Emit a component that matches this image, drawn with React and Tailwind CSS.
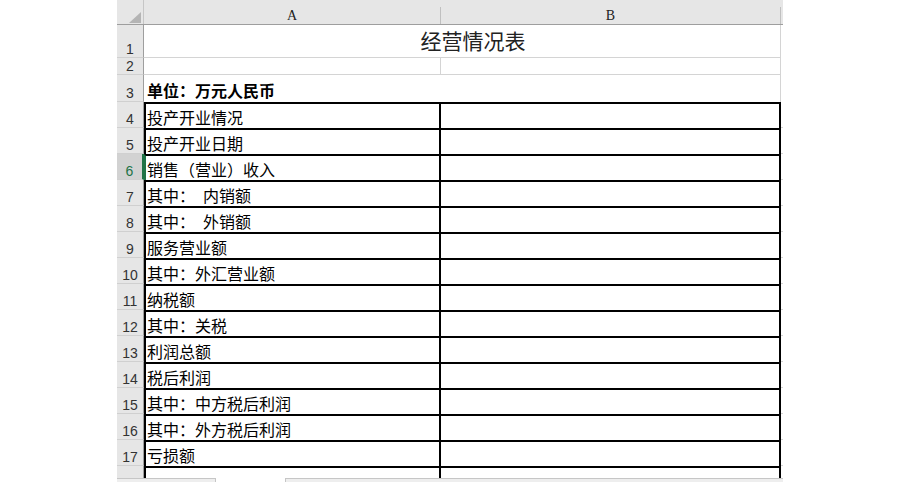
import React from "react";

const rows = [
  { n: 4, label: "投产开业情况" },
  { n: 5, label: "投产开业日期" },
  { n: 6, label: "销售（营业）收入", selected: true },
  { n: 7, label: "其中：\u2002内销额" },
  { n: 8, label: "其中：\u2002外销额" },
  { n: 9, label: "服务营业额" },
  { n: 10, label: "其中：外汇营业额" },
  { n: 11, label: "纳税额" },
  { n: 12, label: "其中：关税" },
  { n: 13, label: "利润总额" },
  { n: 14, label: "税后利润" },
  { n: 15, label: "其中：中方税后利润" },
  { n: 16, label: "其中：外方税后利润" },
  { n: 17, label: "亏损额" },
  { n: 18, label: "", hideNum: true },
];

const cjk = "font-['Noto_Sans_CJK_SC','Noto_Sans',sans-serif]";

function RowHead({ n, selected, hideNum }) {
  return (
    <div
      className={`w-[27px] shrink-0 flex items-end justify-center border-b border-[#d0d0d0] font-['Liberation_Sans',sans-serif] text-[14px] leading-none ${
        selected
          ? "bg-[#d2d2d2] text-[#217346] border-r-2 border-r-[#217346]"
          : "bg-[#e6e6e6] text-[#333] border-r border-r-[#9e9e9e]"
      }`}
    >
      {!hideNum && <span className="pb-[1px]">{n}</span>}
    </div>
  );
}

export default function App() {
  return (
    <div className="w-[900px] h-[482px] overflow-hidden bg-white flex flex-col">
      <div className="flex-1 overflow-hidden pl-[117px]">
        <div className="w-[666px]">
          {/* column header */}
          <div className="flex h-[25px] bg-[#e6e6e6] border-b border-[#9e9e9e]">
            <div className="w-[27px] shrink-0 flex items-end justify-end pr-[2px] pb-[1px] border-r border-[#c6c6c6]">
              <svg width="12" height="11" viewBox="0 0 12 11">
                <polygon points="12,0 12,11 0,11" fill="#b4b4b4" />
              </svg>
            </div>
            <div className="w-[297px] shrink-0 pt-[7px]">
              <div className="h-full border-r border-[#c0c0c0] flex items-end justify-center pb-[1px] font-['Liberation_Serif',serif] text-[14px] leading-none text-[#222]">
                A
              </div>
            </div>
            <div className="w-[340px] shrink-0 pt-[7px]">
              <div className="h-full border-r border-[#c0c0c0] flex items-end justify-center pb-[1px] font-['Liberation_Serif',serif] text-[14px] leading-none text-[#222]">
                B
              </div>
            </div>
            <div className="w-[2px] shrink-0" />
          </div>

          {/* row 1 */}
          <div className="flex h-[33px]">
            <RowHead n={1} />
            <div
              className={`w-[637px] shrink-0 border-r border-b border-[#d4d4d4] flex items-end justify-center pl-[22px] pb-[6px] text-[21px] leading-none text-[#222] ${cjk}`}
            >
              经营情况表
            </div>
          </div>

          {/* row 2 */}
          <div className="flex h-[17px]">
            <RowHead n={2} />
            <div className="w-[297px] shrink-0 border-r border-b border-[#d4d4d4]" />
            <div className="w-[340px] shrink-0 border-r border-b border-[#d4d4d4]" />
          </div>

          {/* row 3 */}
          <div className="flex h-[27px]">
            <RowHead n={3} />
            <div
              className={`w-[637px] shrink-0 border-r border-[#d4d4d4] flex items-center pl-[3px] pt-[2px] text-[16px] font-bold leading-none text-black ${cjk}`}
            >
              单位：万元人民币
            </div>
          </div>

          {/* bordered block */}
          {rows.map((r) => (
            <div key={r.n} className="flex h-[26px]">
              <RowHead n={r.n} selected={r.selected} hideNum={r.hideNum} />
              <div
                className={`w-[295px] shrink-0 border-l-2 border-t-2 border-t-black flex items-center pl-[1px] pt-[2px] text-[16px] leading-none text-black whitespace-pre ${cjk} ${
                  r.selected ? "border-l-[#217346]" : "border-l-black"
                }`}
              >
                {r.label}
              </div>
              <div className="w-[342px] shrink-0 border-l-2 border-t-2 border-r-2 border-black" />
              <div className="w-[2px] shrink-0 border-b border-[#d4d4d4]" />
            </div>
          ))}
        </div>
      </div>

      {/* sheet tab strip */}
      <div className="h-[4px] shrink-0 flex pl-[117px]">
        <div className="w-[99px] bg-[#eeeeee] border-t border-r border-[#c6c6c6]" />
        <div className="w-[69px]" />
        <div className="w-[498px] bg-[#eeeeee] border-t border-l border-[#c6c6c6]" />
      </div>
    </div>
  );
}
